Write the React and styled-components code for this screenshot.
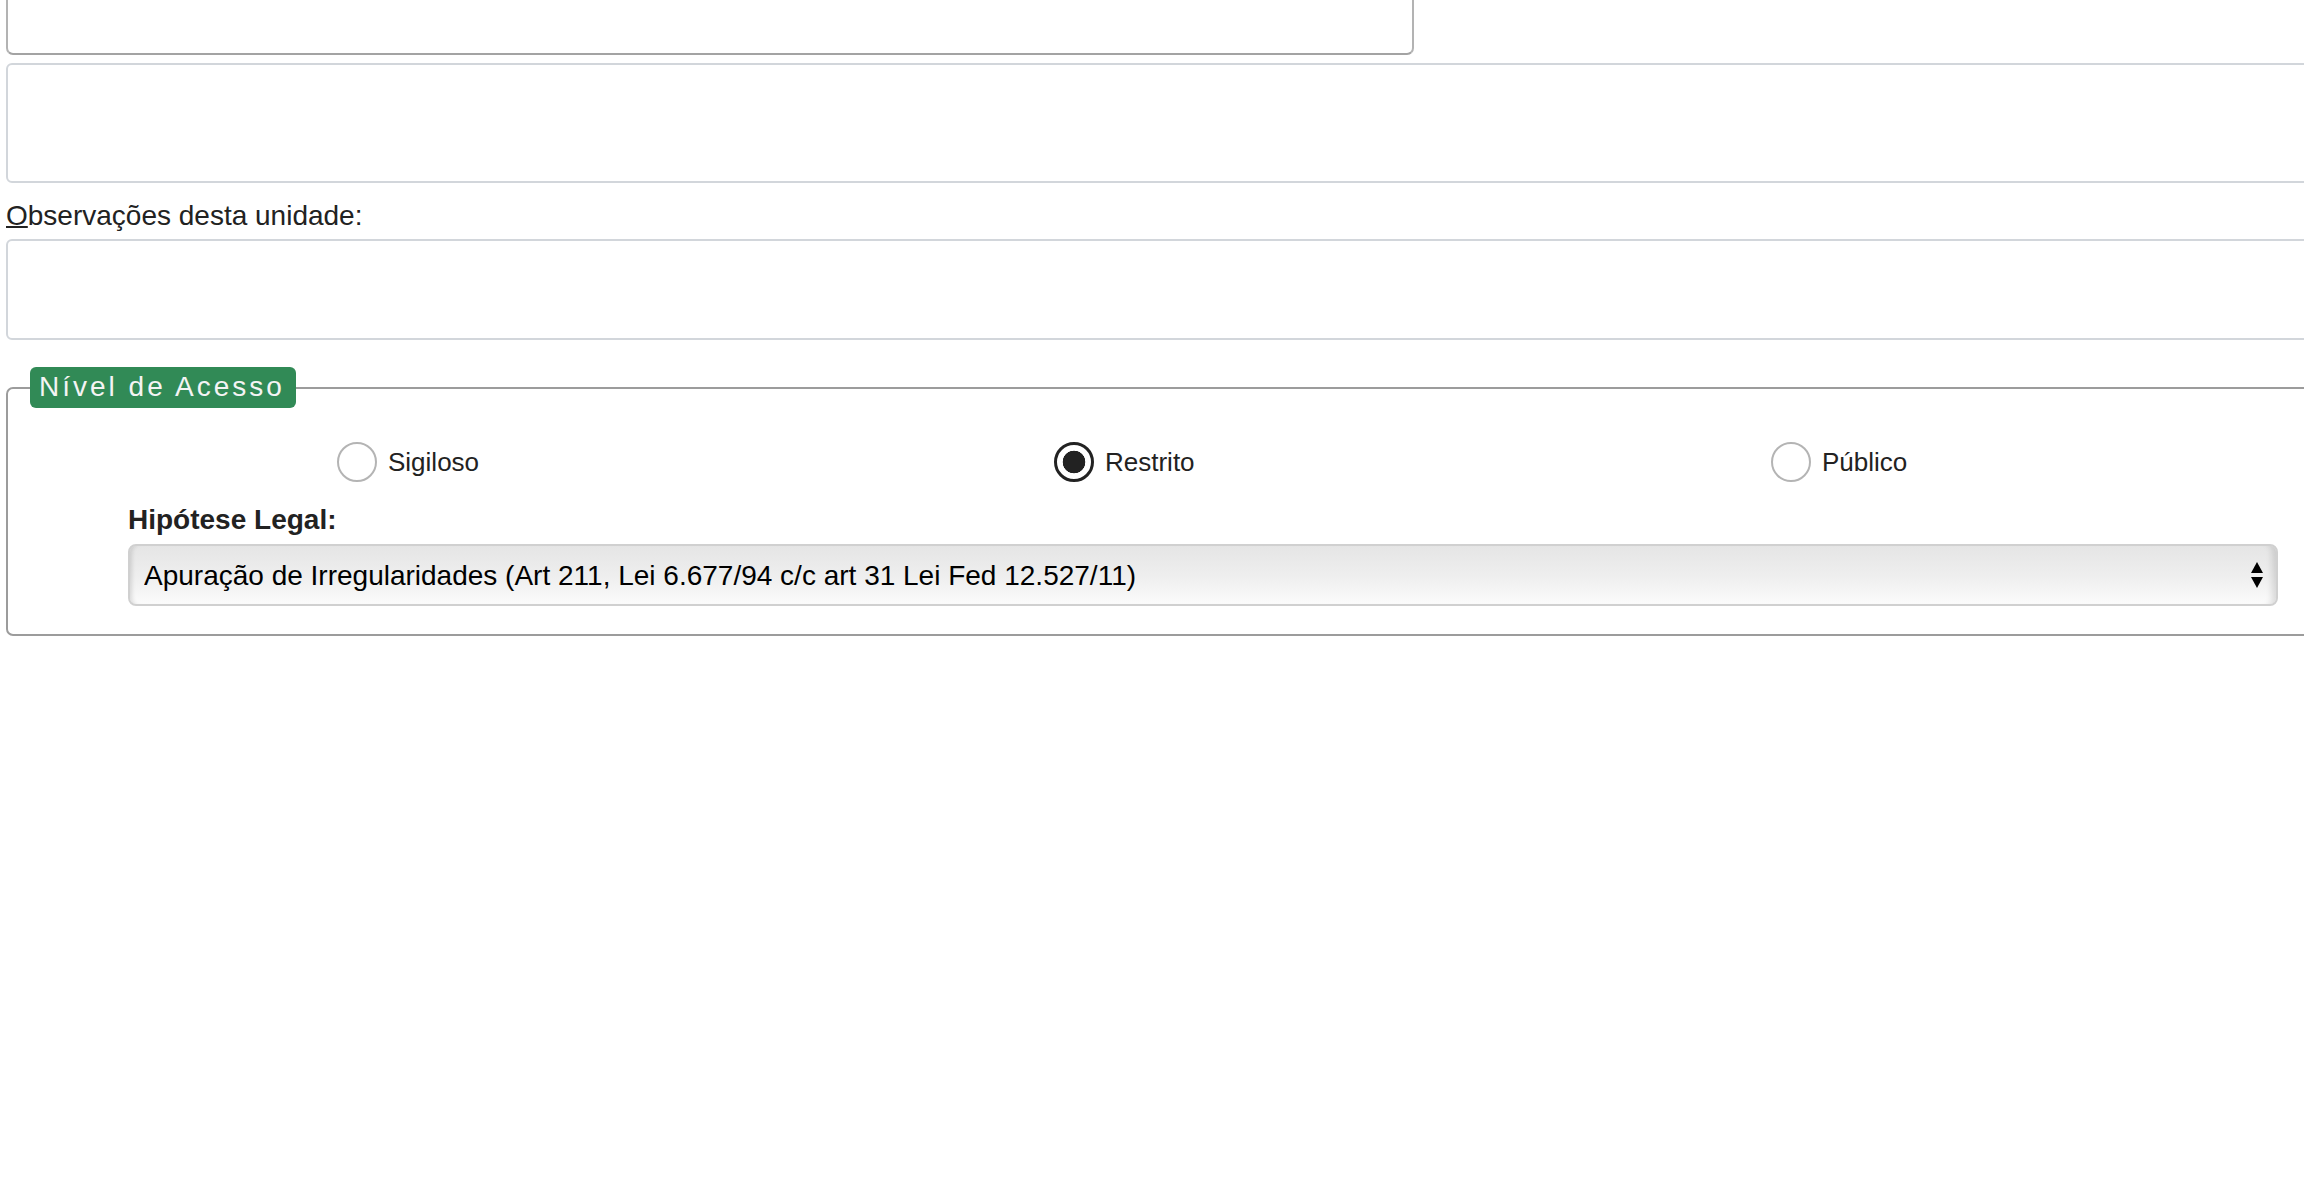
import React, { useState } from 'react';
import styled, { createGlobalStyle } from 'styled-components';

const GlobalStyle = createGlobalStyle`
  html, body {
    margin: 0;
    padding: 0;
    background: #fff;
    overflow: hidden;
  }
  body {
    font-family: "Liberation Sans", Arial, Helvetica, sans-serif;
    color: #222;
  }
`;

const Page = styled.div`
  width: 2360px;
  padding-left: 6px;
`;

const TopInput = styled.input`
  display: block;
  box-sizing: border-box;
  width: 1408px;
  height: 55px;
  margin: 0;
  border: 2px solid #b3b3b3;
  border-top: none;
  border-bottom-color: #a3a3a3;
  border-radius: 0 0 7px 7px;
  background: #fff;
  outline: none;
`;

const TextArea = styled.textarea`
  display: block;
  box-sizing: border-box;
  width: 100%;
  height: ${p => p.$h}px;
  margin: ${p => p.$top}px 0 0;
  border: 2px solid #d2d6db;
  border-radius: 6px;
  resize: none;
  background: #fff;
  outline: none;
`;

const FieldLabel = styled.label`
  display: block;
  margin-top: 17px;
  font-size: 28px;
  line-height: 32px;
  color: #222;

  u {
    text-decoration: underline;
    text-decoration-thickness: 2px;
  }
`;

const Fieldset = styled.fieldset`
  box-sizing: border-box;
  width: 100%;
  min-inline-size: 0;
  margin: 27px 0 0;
  padding: 0 0 28px;
  border: 2px solid #9c9c9c;
  border-radius: 7px;
`;

const Legend = styled.legend`
  margin-left: 22px;
  padding: 4px 11px 5px 9px;
  background: #318a56;
  color: #f4f4f4;
  font-size: 28px;
  line-height: 32px;
  letter-spacing: 3px;
  border-radius: 6px;
`;

const OptionRow = styled.div`
  display: grid;
  grid-template-columns: 717px 717px auto;
  height: 40px;
  margin: 34px 0 0 329px;
`;

const Option = styled.label`
  display: flex;
  align-items: center;
  gap: 11px;
  font-size: 26px;
  color: #222;
  cursor: pointer;
`;

const Radio = styled.input.attrs({ type: 'radio' })`
  appearance: none;
  box-sizing: border-box;
  flex: none;
  width: 40px;
  height: 40px;
  margin: 0;
  border: 2px solid #b4b4b4;
  border-radius: 50%;
  background: #fff;
  cursor: pointer;

  &:checked {
    border: 3px solid #222;
    background: radial-gradient(circle, #222 0 11px, #fff 11.6px);
  }
`;

const LegalBlock = styled.div`
  width: 2150px;
  margin: 22px 0 0 120px;
`;

const LegalLabel = styled.label`
  display: block;
  font-size: 28px;
  line-height: 32px;
  font-weight: bold;
  color: #222;
`;

const SelectWrap = styled.div`
  position: relative;
  margin-top: 8px;
`;

const Select = styled.select`
  appearance: none;
  display: block;
  box-sizing: border-box;
  width: 100%;
  height: 62px;
  margin: 0;
  padding: 0 50px 0 14px;
  font-family: inherit;
  font-size: 28px;
  color: #000;
  border: 2px solid #d0d0d0;
  border-radius: 8px;
  background: linear-gradient(#e5e5e5, #efefef 55%, #fbfbfb);
  box-shadow: inset 5px 0 4px -3px rgba(0, 0, 0, 0.12),
    inset -10px 0 6px -6px rgba(0, 0, 0, 0.12);
  outline: none;
`;

const Arrows = styled.svg`
  position: absolute;
  right: 15px;
  top: 50%;
  transform: translateY(-50%);
  pointer-events: none;
`;

const levels = ['Sigiloso', 'Restrito', 'Público'];

const App = () => {
    const [level, setLevel] = useState('Restrito');

    return <Page>
        <GlobalStyle />
        <TopInput type="text" />
        <TextArea $top={8} $h={120} />
        <FieldLabel><u>O</u>bservações desta unidade:</FieldLabel>
        <TextArea $top={7} $h={101} />

        <Fieldset>
            <Legend>Nível de Acesso</Legend>
            <OptionRow>
                {levels.map(l => (
                    <Option key={l}>
                        <Radio name="nivel" checked={level === l} onChange={() => setLevel(l)} />
                        {l}
                    </Option>
                ))}
            </OptionRow>
            <LegalBlock>
                <LegalLabel>Hipótese Legal:</LegalLabel>
                <SelectWrap>
                    <Select defaultValue="1">
                        <option value="1">Apuração de Irregularidades (Art 211, Lei 6.677/94 c/c art 31 Lei Fed 12.527/11)</option>
                    </Select>
                    <Arrows width="12" height="26" viewBox="0 0 12 26">
                        <path d="M6 0 L12 11 L0 11 Z" fill="#000" />
                        <path d="M0 15 L12 15 L6 26 Z" fill="#000" />
                    </Arrows>
                </SelectWrap>
            </LegalBlock>
        </Fieldset>
    </Page>;
};

export default App;
